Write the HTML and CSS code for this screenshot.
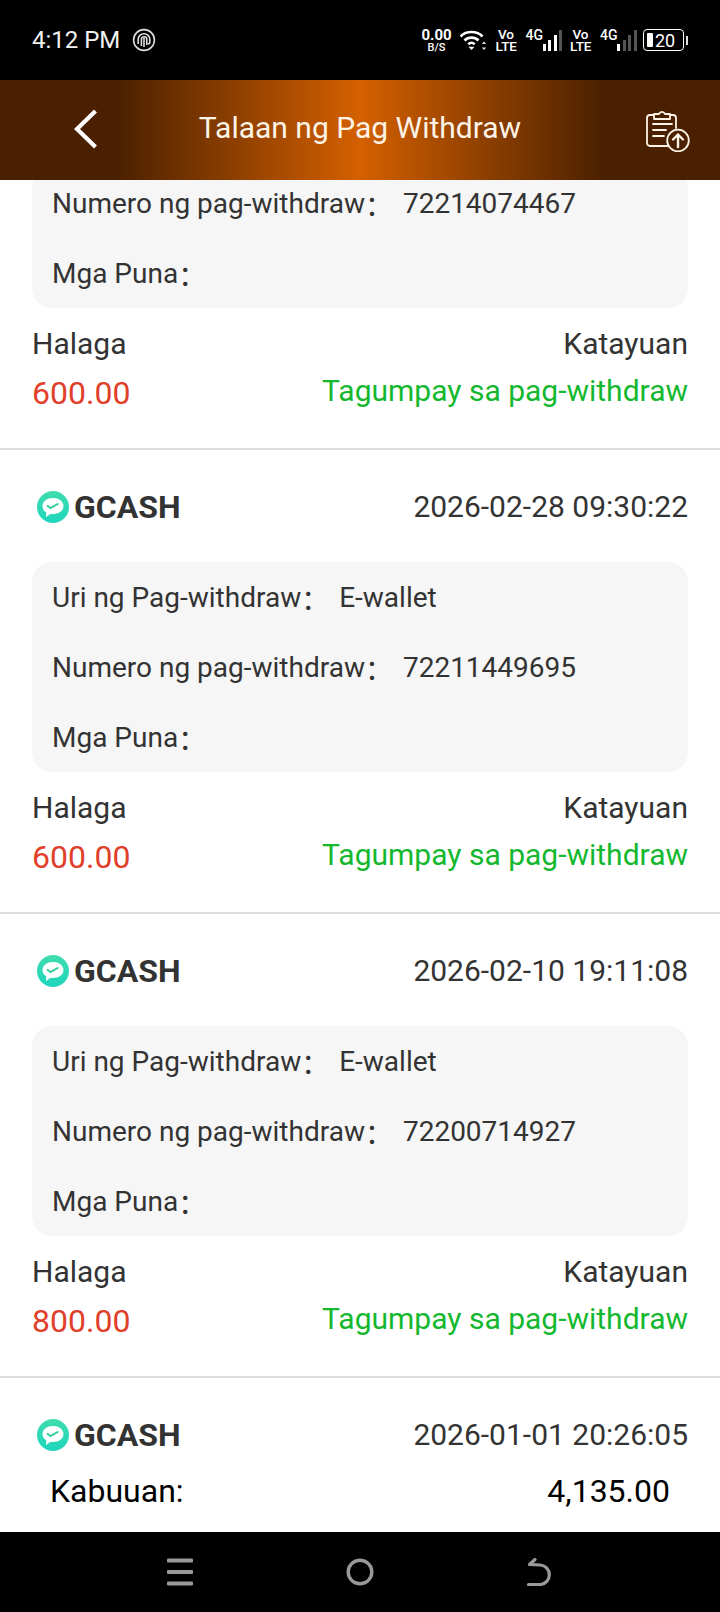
FILE: index.html
```html
<!DOCTYPE html>
<html lang="en">
<head>
    <meta charset="UTF-8">
    <meta name="viewport" content="width=device-width, initial-scale=1.0">
    <title>Talaan ng Pag Withdraw</title>
    <link rel="stylesheet" href="styles.css">
</head>
<body>
    <div class="statusbar">
        <div class="status-left">
            <span class="time">4:12 PM</span>
            <svg class="finger" width="24" height="24" viewBox="0 0 24 24" fill="none" stroke="#ddd" stroke-width="1.6">
                <circle cx="12" cy="12" r="10.4"/>
                <path d="M6.2 16V11.5a5.8 5.8 0 0 1 11.6 0V14a2 2 0 0 1-2 2"/>
                <path d="M9.4 18V11.5a2.7 2.7 0 0 1 5.4 0V17"/>
                <path d="M12 10v9"/>
            </svg>
        </div>
        <div class="status-right">
            <div class="speed"><b>0.00</b><span>B/S</span></div>
            <svg class="wifi" width="26" height="22" viewBox="0 0 26 22" fill="none" stroke="#fff" stroke-width="2.6">
                <path d="M0.500 7.500C6 1.500 17 1.500 22.500 7.500"/>
                <path d="M4.500 11.500c3.800-3.800 10.200-3.800 14 0"/>
                <path d="M8.300 15.200c2-1.800 4.400-1.800 6.400 0"/>
                <path d="M11.500 21l-3-3.200h6z" fill="#fff" stroke="none"/>
                <path d="M24 12.500l-2.200 2.600h4.400zM24 21l-2.200-2.600h4.400z" fill="#ddd" stroke="none"/>
            </svg>
            <div class="volte">Vo LTE</div>
            <div class="signal">
                <span class="net">4G</span>
                <i class="bar b1"></i><i class="bar b2"></i><i class="bar b3"></i><i class="bar b4 off"></i>
            </div>
            <div class="volte">Vo LTE</div>
            <div class="signal">
                <span class="net">4G</span>
                <i class="bar b1"></i><i class="bar b2 off"></i><i class="bar b3 off"></i><i class="bar b4 off"></i>
            </div>
            <div class="battery">
                <div class="battery-body"><i class="battery-fill"></i><span>20</span></div>
                <i class="battery-nub"></i>
            </div>
        </div>
    </div>

    <header class="topbar">
        <svg class="back" width="24" height="40" viewBox="0 0 24 40" fill="none" stroke="#fff" stroke-width="4.200">
            <path d="M21.500 2L3 20l18.500 18"/>
        </svg>
        <h1>Talaan ng Pag Withdraw</h1>
        <svg class="records" width="44" height="44" viewBox="0 0 44 44" fill="none" stroke="#fdf3e6" stroke-width="1.800" stroke-linecap="round" stroke-linejoin="round">
            <path d="M22 38H4a3 3 0 0 1-3-3V10a3 3 0 0 1 3-3h4"/>
            <path d="M24 7h3a3 3 0 0 1 3 3v10"/>
            <path d="M8 11V6h5a3.200 3.200 0 0 1 6 0h5v5z"/>
            <path d="M7 16h19M7 22h13M7 28h11"/>
            <circle cx="32" cy="32.500" r="10.800"/>
            <path d="M32 39V26.500M27 31.500l5-5 5 5" stroke-width="2.400"/>
        </svg>
    </header>

    <main class="list">
        <section class="record">
            <div class="details details-cut">
                <div class="detail"><span class="detail-label">Numero ng pag-withdraw</span><span class="colon">：</span><span class="detail-value">72214074467</span></div>
                <div class="detail"><span class="detail-label">Mga Puna</span><span class="colon">：</span></div>
            </div>
            <div class="summary">
                <div class="summary-labels"><span>Halaga</span><span>Katayuan</span></div>
                <div class="summary-values"><span class="amount">600.00</span><span class="state">Tagumpay sa pag-withdraw</span></div>
            </div>
        </section>

        <section class="record">
            <div class="record-head">
                <div class="brand">
                    <svg class="logo" width="34" height="34" viewBox="0 0 34 34"><use href="#gcash"/></svg>
                    <span>GCASH</span>
                </div>
                <span class="date">2026-02-28 09:30:22</span>
            </div>
            <div class="details">
                <div class="detail"><span class="detail-label">Uri ng Pag-withdraw</span><span class="colon">：</span><span class="detail-value">E-wallet</span></div>
                <div class="detail"><span class="detail-label">Numero ng pag-withdraw</span><span class="colon">：</span><span class="detail-value">72211449695</span></div>
                <div class="detail"><span class="detail-label">Mga Puna</span><span class="colon">：</span></div>
            </div>
            <div class="summary">
                <div class="summary-labels"><span>Halaga</span><span>Katayuan</span></div>
                <div class="summary-values"><span class="amount">600.00</span><span class="state">Tagumpay sa pag-withdraw</span></div>
            </div>
        </section>

        <section class="record">
            <div class="record-head">
                <div class="brand">
                    <svg class="logo" width="34" height="34" viewBox="0 0 34 34"><use href="#gcash"/></svg>
                    <span>GCASH</span>
                </div>
                <span class="date">2026-02-10 19:11:08</span>
            </div>
            <div class="details">
                <div class="detail"><span class="detail-label">Uri ng Pag-withdraw</span><span class="colon">：</span><span class="detail-value">E-wallet</span></div>
                <div class="detail"><span class="detail-label">Numero ng pag-withdraw</span><span class="colon">：</span><span class="detail-value">72200714927</span></div>
                <div class="detail"><span class="detail-label">Mga Puna</span><span class="colon">：</span></div>
            </div>
            <div class="summary">
                <div class="summary-labels"><span>Halaga</span><span>Katayuan</span></div>
                <div class="summary-values"><span class="amount">800.00</span><span class="state">Tagumpay sa pag-withdraw</span></div>
            </div>
        </section>

        <section class="record">
            <div class="record-head">
                <div class="brand">
                    <svg class="logo" width="34" height="34" viewBox="0 0 34 34"><use href="#gcash"/></svg>
                    <span>GCASH</span>
                </div>
                <span class="date">2026-01-01 20:26:05</span>
            </div>
        </section>
    </main>

    <div class="total">
        <span>Kabuuan:</span>
        <span>4,135.00</span>
    </div>

    <nav class="navbar">
        <svg width="28" height="28" viewBox="0 0 28 28" fill="#999">
            <rect x="1" y="0.500" width="26" height="4" rx="1"/>
            <rect x="1" y="12" width="26" height="4" rx="1"/>
            <rect x="1" y="23.500" width="26" height="4" rx="1"/>
        </svg>
        <svg width="28" height="28" viewBox="0 0 28 28" fill="none" stroke="#999" stroke-width="3.400">
            <circle cx="14" cy="14" r="11.800"/>
        </svg>
        <svg width="28" height="28" viewBox="0 0 28 28" fill="none" stroke="#999" stroke-width="3.200" stroke-linecap="round" stroke-linejoin="round">
            <path d="M9 1.500L3.500 6.500l11 .5a9.800 9.800 0 0 1 0 19.500H2.500"/>
        </svg>
    </nav>

    <svg class="defs" width="0" height="0">
        <defs>
            <linearGradient id="gcashFill" x1="0" y1="0" x2="0" y2="1">
                <stop offset="0" stop-color="#3fdcae"/>
                <stop offset="1" stop-color="#1fd6bd"/>
            </linearGradient>
            <symbol id="gcash" viewBox="0 0 34 34">
                <circle cx="17" cy="17" r="16" fill="url(#gcashFill)"/>
                <path d="M17 8c6 0 10.500 3.400 10.500 8s-4.500 8-10.500 8c-.8 0-1.600 0-2.300-.2L10 27l.2-4.700C7.700 20.800 6.500 18.600 6.500 16 6.500 11.400 11 8 17 8z" fill="#fff"/>
                <path d="M11 15.500l3.500 2.500 8-4.500" fill="none" stroke="#2fcf9f" stroke-width="2"/>
            </symbol>
        </defs>
    </svg>
</body>
</html>
```

FILE: styles.css
```css
* {
    box-sizing: border-box;
}

html, body {
    margin: 0;
    height: 100%;
}

body {
    display: flex;
    flex-direction: column;
    height: 1612px;
    overflow: hidden;
    background-color: #fff;
    font-family: Roboto, sans-serif;
    color: #333;
}

.defs {
    position: absolute;
}

/* status bar */
.statusbar {
    height: 80px;
    flex: none;
    display: flex;
    justify-content: space-between;
    align-items: center;
    padding: 0 32px;
    background-color: #000;
    color: #fff;
}

.status-left {
    display: flex;
    align-items: center;
    gap: 12px;
}

.time {
    font-size: 24px;
    color: #f2f2f2;
}

.status-right {
    display: flex;
    align-items: center;
    gap: 8px;
}

.speed {
    display: flex;
    flex-direction: column;
    align-items: center;
    width: 30px;
    line-height: 11px;
}

.speed b {
    font-size: 15px;
    line-height: 14px;
}

.speed span {
    font-size: 11px;
    font-weight: 500;
}

.wifi {
    margin-right: 2px;
}

.volte {
    width: 21px;
    font-size: 13.500px;
    font-weight: 500;
    line-height: 12px;
    text-align: center;
}

.signal {
    display: flex;
    align-items: flex-end;
    gap: 2.500px;
    height: 22px;
    margin-left: 1px;
}

.net {
    align-self: flex-start;
    width: 17px;
    margin-right: -2.500px;
    font-size: 14px;
    font-weight: 500;
    line-height: 12px;
}

.bar {
    width: 3px;
    background-color: #fff;
}

.bar.off {
    background-color: #555;
}

.b1 { height: 7px; }
.b2 { height: 11px; }
.b3 { height: 16px; }
.b4 { height: 21px; }

.battery {
    display: flex;
    align-items: center;
    gap: 2px;
    margin-left: -1.500px;
}

.battery-body {
    display: flex;
    align-items: center;
    gap: 2px;
    width: 41px;
    height: 22px;
    padding: 0 3px;
    border: 1.500px solid #fff;
    border-radius: 4px;
    font-size: 18px;
}

.battery-fill {
    width: 6px;
    height: 14px;
    border-radius: 1px;
    background-color: #fff;
}

.battery-nub {
    width: 2px;
    height: 9px;
    background-color: #ddd;
}

/* title bar */
.topbar {
    height: 100px;
    flex: none;
    display: grid;
    grid-template-columns: 1fr auto 1fr;
    align-items: center;
    padding: 0 30px;
    background: linear-gradient(90deg, #4a2000 16%, #d46000 50%, #4a2000 84%);
}

.back {
    margin: 0 0 3px 44px;
}

.topbar h1 {
    margin: 0 0 5px;
    font-size: 30px;
    font-weight: 400;
    color: #fdf3e6;
}

.records {
    justify-self: end;
}

/* records */
.list {
    flex: 1;
    min-height: 0;
    overflow: hidden;
}

.record {
    padding: 0 32px;
    border-bottom: 2px solid #ddd;
}

.record:last-child {
    border-bottom: none;
}

.record-head {
    height: 112px;
    display: flex;
    justify-content: space-between;
    align-items: center;
}

.brand {
    display: flex;
    align-items: center;
    gap: 4px;
    margin-top: 2px;
    padding-left: 4px;
    font-size: 32px;
    font-weight: 700;
}

.date {
    margin-top: 1px;
    font-size: 30px;
}

.details {
    padding: 0 20px;
    border-radius: 20px;
    background-color: #f6f6f6;
}

.details-cut {
    margin-top: -12px;
}

.detail {
    height: 70px;
    display: flex;
    align-items: center;
    padding-top: 2px;
    font-size: 28px;
    line-height: 32px;
}

.colon {
    width: 38px;
    height: 32px;
    font-family: "Noto Sans CJK SC", sans-serif;
    line-height: 32px;
}

.summary {
    padding: 12px 0 36px;
}

.summary-labels,
.summary-values {
    display: flex;
    justify-content: space-between;
    align-items: center;
}

.summary-labels {
    height: 46px;
    font-size: 30px;
}

.summary-values {
    height: 46px;
}

.amount {
    margin-top: 8px;
    font-size: 32px;
    color: #e0402a;
}

.state {
    margin-top: 3px;
    font-size: 30px;
    color: #14b82e;
}

/* total */
.total {
    height: 72px;
    flex: none;
    display: flex;
    justify-content: space-between;
    align-items: center;
    padding: 0 50px 10px;
    background-color: #fff;
    font-size: 32px;
    color: #000;
}

/* bottom buttons */
.navbar {
    height: 80px;
    flex: none;
    display: grid;
    grid-template-columns: repeat(3, 1fr);
    justify-items: center;
    align-items: center;
    padding: 0 90px;
    background-color: #000;
}
```
